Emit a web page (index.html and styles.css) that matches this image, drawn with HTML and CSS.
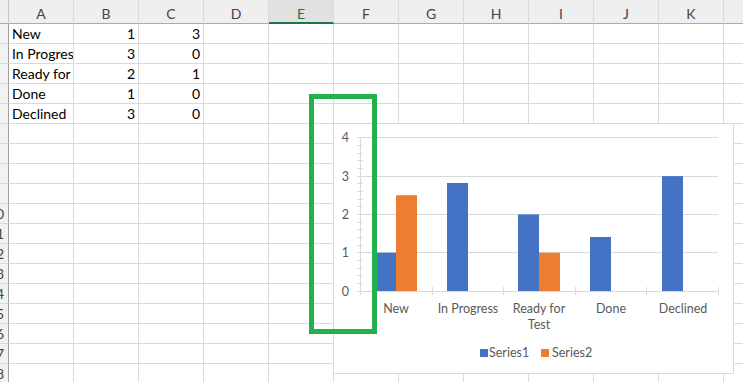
FILE: index.html
```html
<!DOCTYPE html>
<html>
<head>
	<title>Book1 - Excel</title>
	<meta http-equiv="Content-Type" content="text/html;charset=utf-8" />
	<link rel="stylesheet" href="styles.css">
</head>
<body>

<div class="sheet">
	<div class="corner"></div>
	<div class="ch">A</div><div class="ch">B</div><div class="ch">C</div><div class="ch">D</div><div class="ch active">E</div><div class="ch">F</div><div class="ch">G</div><div class="ch">H</div><div class="ch">I</div><div class="ch">J</div><div class="ch">K</div><div class="ch"></div>

	<div class="rh"><span>1</span></div><div class="c">New</div><div class="c n">1</div><div class="c n">3</div><div class="c"></div><div class="c"></div><div class="c"></div><div class="c"></div><div class="c"></div><div class="c"></div><div class="c"></div><div class="c"></div><div class="c"></div>
	<div class="rh"><span>2</span></div><div class="c">In Progress</div><div class="c n">3</div><div class="c n">0</div><div class="c"></div><div class="c"></div><div class="c"></div><div class="c"></div><div class="c"></div><div class="c"></div><div class="c"></div><div class="c"></div><div class="c"></div>
	<div class="rh"><span>3</span></div><div class="c">Ready for Test</div><div class="c n">2</div><div class="c n">1</div><div class="c"></div><div class="c"></div><div class="c"></div><div class="c"></div><div class="c"></div><div class="c"></div><div class="c"></div><div class="c"></div><div class="c"></div>
	<div class="rh"><span>4</span></div><div class="c">Done</div><div class="c n">1</div><div class="c n">0</div><div class="c"></div><div class="c"></div><div class="c"></div><div class="c"></div><div class="c"></div><div class="c"></div><div class="c"></div><div class="c"></div><div class="c"></div>
	<div class="rh"><span>5</span></div><div class="c">Declined</div><div class="c n">3</div><div class="c n">0</div><div class="c"></div><div class="c"></div><div class="c"></div><div class="c"></div><div class="c"></div><div class="c"></div><div class="c"></div><div class="c"></div><div class="c"></div>
	<div class="rh"><span>6</span></div><div class="c"></div><div class="c"></div><div class="c"></div><div class="c"></div><div class="c"></div><div class="c"></div><div class="c"></div><div class="c"></div><div class="c"></div><div class="c"></div><div class="c"></div><div class="c"></div>
	<div class="rh"><span>7</span></div><div class="c"></div><div class="c"></div><div class="c"></div><div class="c"></div><div class="c"></div><div class="c"></div><div class="c"></div><div class="c"></div><div class="c"></div><div class="c"></div><div class="c"></div><div class="c"></div>
	<div class="rh"><span>8</span></div><div class="c"></div><div class="c"></div><div class="c"></div><div class="c"></div><div class="c"></div><div class="c"></div><div class="c"></div><div class="c"></div><div class="c"></div><div class="c"></div><div class="c"></div><div class="c"></div>
	<div class="rh"><span>9</span></div><div class="c"></div><div class="c"></div><div class="c"></div><div class="c"></div><div class="c"></div><div class="c"></div><div class="c"></div><div class="c"></div><div class="c"></div><div class="c"></div><div class="c"></div><div class="c"></div>
	<div class="rh"><span>10</span></div><div class="c"></div><div class="c"></div><div class="c"></div><div class="c"></div><div class="c"></div><div class="c"></div><div class="c"></div><div class="c"></div><div class="c"></div><div class="c"></div><div class="c"></div><div class="c"></div>
	<div class="rh"><span>11</span></div><div class="c"></div><div class="c"></div><div class="c"></div><div class="c"></div><div class="c"></div><div class="c"></div><div class="c"></div><div class="c"></div><div class="c"></div><div class="c"></div><div class="c"></div><div class="c"></div>
	<div class="rh"><span>12</span></div><div class="c"></div><div class="c"></div><div class="c"></div><div class="c"></div><div class="c"></div><div class="c"></div><div class="c"></div><div class="c"></div><div class="c"></div><div class="c"></div><div class="c"></div><div class="c"></div>
	<div class="rh"><span>13</span></div><div class="c"></div><div class="c"></div><div class="c"></div><div class="c"></div><div class="c"></div><div class="c"></div><div class="c"></div><div class="c"></div><div class="c"></div><div class="c"></div><div class="c"></div><div class="c"></div>
	<div class="rh"><span>14</span></div><div class="c"></div><div class="c"></div><div class="c"></div><div class="c"></div><div class="c"></div><div class="c"></div><div class="c"></div><div class="c"></div><div class="c"></div><div class="c"></div><div class="c"></div><div class="c"></div>
	<div class="rh"><span>15</span></div><div class="c"></div><div class="c"></div><div class="c"></div><div class="c"></div><div class="c"></div><div class="c"></div><div class="c"></div><div class="c"></div><div class="c"></div><div class="c"></div><div class="c"></div><div class="c"></div>
	<div class="rh"><span>16</span></div><div class="c"></div><div class="c"></div><div class="c"></div><div class="c"></div><div class="c"></div><div class="c"></div><div class="c"></div><div class="c"></div><div class="c"></div><div class="c"></div><div class="c"></div><div class="c"></div>
	<div class="rh"><span>17</span></div><div class="c"></div><div class="c"></div><div class="c"></div><div class="c"></div><div class="c"></div><div class="c"></div><div class="c"></div><div class="c"></div><div class="c"></div><div class="c"></div><div class="c"></div><div class="c"></div>
	<div class="rh"><span>18</span></div><div class="c"></div><div class="c"></div><div class="c"></div><div class="c"></div><div class="c"></div><div class="c"></div><div class="c"></div><div class="c"></div><div class="c"></div><div class="c"></div><div class="c"></div><div class="c"></div>

	<!-- chart floats over the cells -->
	<div class="chart">
		<svg width="401" height="251" viewBox="0 0 401 251">
			<rect x="0.5" y="0.5" width="400" height="250" fill="#fff" stroke="#d9d9d9"/>
			<g stroke="#d9d9d9" stroke-width="1">
				<line x1="27" y1="14.5" x2="385" y2="14.5"/>
				<line x1="27" y1="53.5" x2="385" y2="53.5"/>
				<line x1="27" y1="91.5" x2="385" y2="91.5"/>
				<line x1="27" y1="129.5" x2="385" y2="129.5"/>
			</g>
			<g fill="#4472c4">
				<rect x="42" y="129.7" width="21" height="38.3"/>
				<rect x="114" y="60" width="21" height="108"/>
				<rect x="185" y="91.4" width="21" height="76.6"/>
				<rect x="257" y="114" width="21" height="54"/>
				<rect x="329" y="53.1" width="21" height="114.9"/>
			</g>
			<g fill="#ed7d31">
				<rect x="63" y="72.2" width="21" height="95.8"/>
				<rect x="206" y="129.7" width="21" height="38.3"/>
			</g>
			<g stroke="#d9d9d9" stroke-width="1">
				<line x1="27.5" y1="14" x2="27.5" y2="168"/>
				<line x1="24" y1="22.5" x2="30" y2="22.5"/>
				<line x1="24" y1="30.5" x2="30" y2="30.5"/>
				<line x1="24" y1="37.5" x2="30" y2="37.5"/>
				<line x1="24" y1="45.5" x2="30" y2="45.5"/>
				<line x1="24" y1="60.5" x2="30" y2="60.5"/>
				<line x1="24" y1="68.5" x2="30" y2="68.5"/>
				<line x1="24" y1="76.5" x2="30" y2="76.5"/>
				<line x1="24" y1="83.5" x2="30" y2="83.5"/>
				<line x1="24" y1="99.5" x2="30" y2="99.5"/>
				<line x1="24" y1="106.5" x2="30" y2="106.5"/>
				<line x1="24" y1="114.5" x2="30" y2="114.5"/>
				<line x1="24" y1="122.5" x2="30" y2="122.5"/>
				<line x1="24" y1="137.5" x2="30" y2="137.5"/>
				<line x1="24" y1="145.5" x2="30" y2="145.5"/>
				<line x1="24" y1="152.5" x2="30" y2="152.5"/>
				<line x1="24" y1="160.5" x2="30" y2="160.5"/>
				<line x1="24" y1="14.5" x2="30" y2="14.5"/>
				<line x1="24" y1="53.5" x2="30" y2="53.5"/>
				<line x1="24" y1="91.5" x2="30" y2="91.5"/>
				<line x1="24" y1="129.5" x2="30" y2="129.5"/>
				<line x1="24" y1="168.5" x2="385" y2="168.5"/>
				<line x1="27.5" y1="164" x2="27.5" y2="172"/>
				<line x1="99.5" y1="164" x2="99.5" y2="172"/>
				<line x1="170.5" y1="164" x2="170.5" y2="172"/>
				<line x1="242.5" y1="164" x2="242.5" y2="172"/>
				<line x1="313.5" y1="164" x2="313.5" y2="172"/>
				<line x1="385.5" y1="164" x2="385.5" y2="172"/>
			</g>
			<g class="lbl" text-anchor="end">
				<text x="16" y="19">4</text>
				<text x="16" y="58">3</text>
				<text x="16" y="96">2</text>
				<text x="16" y="134">1</text>
				<text x="16" y="173">0</text>
			</g>
			<g class="lbl" text-anchor="middle">
				<text x="63" y="190">New</text>
				<text x="135" y="190">In Progress</text>
				<text x="206" y="190">Ready for</text>
				<text x="206" y="206">Test</text>
				<text x="278" y="190">Done</text>
				<text x="350" y="190">Declined</text>
			</g>
			<rect x="147" y="226" width="8" height="8" fill="#4472c4"/>
			<text class="lbl" x="156" y="234">Series1</text>
			<rect x="208" y="226" width="8" height="8" fill="#ed7d31"/>
			<text class="lbl" x="219" y="234">Series2</text>
		</svg>
	</div>

	<div class="mark"></div>
</div>

</body>
</html>
```

FILE: styles.css
```css
html { height:100%; }
body { height:100%; overflow:hidden; margin:0; padding:0; font-family:Lato, "Liberation Sans", Arial, sans-serif; color:#000; background-color:#fff; }

.sheet {
	position: relative;
	width: 743px;
	overflow: hidden;
	display: grid;
	grid-template-columns: 9px repeat(12, 65px);
	grid-template-rows: 24px;
	grid-auto-rows: 20px;
}
.sheet > div { box-sizing: border-box; }

.corner {
	background: #efefef;
	border-right: 1px solid #c8c8c8;
	border-bottom: 1px solid #ababab;
}
.ch {
	background: #efefef;
	border-right: 1px solid #dadada;
	border-bottom: 1px solid #ababab;
	display: flex;
	align-items: center;
	justify-content: center;
	padding-top: 4px;
	font-size: 14px;
	color: #444;
}
.ch.active {
	background: #e1e1e1;
	border-bottom: 2px solid #217346;
	color: #217346;
	padding-top: 5px;
}

.rh {
	background: #f2f2f2;
	border-right: 1px solid #a0a0a0;
	border-bottom: 1px solid #dadada;
	overflow: hidden;
	font-size: 14px;
	color: #444;
}
.rh span {
	display: block;
	width: 30px;
	margin-left: -19px;
	text-align: center;
	line-height: 20px;
}

.c {
	border-right: 1px solid #dadada;
	border-bottom: 1px solid #dadada;
	padding: 0 3px;
	font-size: 14px;
	line-height: 20px;
	white-space: nowrap;
	overflow: hidden;
}
.c.n { text-align: right; }

.chart {
	position: absolute;
	left: 333px;
	top: 123px;
	width: 401px;
	height: 251px;
}
.chart svg { display: block; }
.lbl { font-family: Lato, "Liberation Sans", Arial, sans-serif; font-size: 12.5px; fill: #595959; }

.mark {
	position: absolute;
	left: 309px;
	top: 94px;
	width: 68px;
	height: 240px;
	border: 5px solid #22b14c;
}
```
